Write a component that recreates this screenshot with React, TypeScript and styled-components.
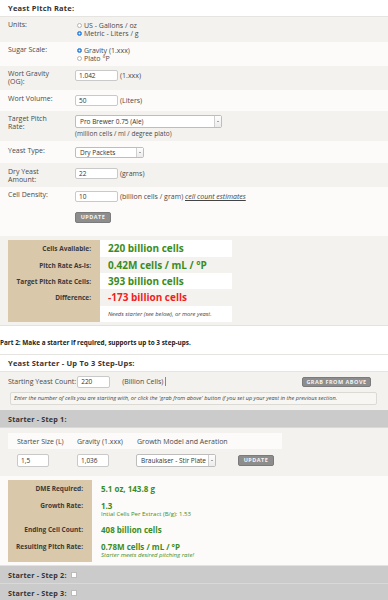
import React from 'react'
import styled, { createGlobalStyle } from 'styled-components'

const GlobalStyle = createGlobalStyle`
  html, body {
    margin: 0;
    padding: 0;
    background: #fff;
  }
  body {
    font-family: "Open Sans", "Liberation Sans", sans-serif;
    color: #4a4a4a;
  }
`

const Page = styled.div`
  width: 388px;
  height: 600px;
  overflow: hidden;
  background: #fff;
`

const SectionTitle = styled.div<{ $border?: boolean }>`
  height: 16px;
  line-height: 16px;
  padding-left: 8px;
  font-size: 7.5px;
  font-weight: 700;
  letter-spacing: 0.2px;
  color: #333;
  border-top: ${p => (p.$border ? '1px solid #e6e4e0' : 'none')};
  border-bottom: 1px solid #e6e4e0;
`

const FormRow = styled.div<{ $alt?: boolean; $h: number; $pt?: number }>`
  display: flex;
  align-items: flex-start;
  box-sizing: border-box;
  height: ${p => p.$h}px;
  padding: ${p => p.$pt ?? 4}px 0 0 8px;
  background: ${p => (p.$alt ? '#fcfbf9' : '#f3f2ef')};
`

const Label = styled.div`
  width: 48px;
  margin-right: 19px;
  font-size: 7px;
  line-height: 8px;
  color: #4a4a4a;
`

const Field = styled.div`
  display: flex;
  flex-direction: column;
  align-items: flex-start;
`

const Inline = styled.div`
  display: flex;
  align-items: center;
  gap: 2px;
  font-size: 7px;
  color: #4a4a4a;
  white-space: nowrap;
`

const RadioLine = styled.div`
  display: flex;
  align-items: center;
  height: 8px;
  font-size: 7px;
  color: #4a4a4a;
  padding-left: 2px;
`

const Radio = styled.span<{ $on?: boolean }>`
  display: inline-block;
  box-sizing: border-box;
  width: 5px;
  height: 5px;
  margin-right: 2px;
  border-radius: 50%;
  border: 1px solid ${p => (p.$on ? '#2f7fd8' : '#b5b5b5')};
  background: ${p =>
    p.$on ? 'radial-gradient(circle, #fff 0 0.7px, #3b8de6 1.1px)' : '#fff'};
`

const TextInput = styled.div<{ $w?: number; $h?: number }>`
  box-sizing: border-box;
  width: ${p => p.$w ?? 43}px;
  height: ${p => p.$h ?? 11}px;
  line-height: ${p => (p.$h ?? 11) - 2}px;
  padding-left: 3px;
  background: #fff;
  border: 1px solid #c9c9c9;
  border-radius: 2px;
  font-size: 6.5px;
  color: #333;
`

const Select = styled.div<{ $w: number; $h: number }>`
  box-sizing: border-box;
  display: flex;
  align-items: stretch;
  width: ${p => p.$w}px;
  height: ${p => p.$h}px;
  background: #fff;
  border: 1px solid #bdbdbd;
  border-radius: 2px;
  font-size: 6.5px;
  color: #333;
`

const SelectText = styled.span`
  flex: 1;
  display: flex;
  align-items: center;
  padding-left: 4px;
  white-space: nowrap;
  overflow: hidden;
`

const SelectArrow = styled.span`
  width: 6px;
  border-left: 1px solid #cfcfcf;
  display: flex;
  align-items: center;
  justify-content: center;
  background: linear-gradient(#fdfdfd, #ececec);
  &::after {
    content: '';
    border-left: 1.3px solid transparent;
    border-right: 1.3px solid transparent;
    border-top: 1.5px solid #555;
  }
`

const Hint = styled.div`
  font-size: 6.5px;
  line-height: 8px;
  color: #4a4a4a;
  margin-top: 2px;
`

const EstimateLink = styled.span`
  font-style: italic;
  text-decoration: underline;
  color: #444;
`

const Button = styled.div<{ $w: number; $h?: number }>`
  box-sizing: border-box;
  flex: 0 0 auto;
  width: ${p => p.$w}px;
  height: ${p => p.$h ?? 11}px;
  line-height: ${p => (p.$h ?? 11) - 2}px;
  text-align: center;
  background: #8d8d8d;
  border: 1px solid #7b7b7b;
  border-radius: 2px;
  color: #f4f4f4;
  font-size: 5.5px;
  font-weight: 700;
  letter-spacing: 0.5px;
  white-space: nowrap;
`

const ButtonGap = styled.div`
  height: 10px;
`

const ResultsPanel = styled.div<{ $bg: string }>`
  background: ${p => p.$bg};
  padding: 4px 0 3px 8px;
  border-bottom: 1px solid #e4e2de;
`

const ResultRow = styled.div<{ $h: number }>`
  display: flex;
  height: ${p => p.$h}px;
`

const ResultLabel = styled.div<{ $w: number }>`
  box-sizing: border-box;
  flex: 0 0 ${p => p.$w}px;
  padding: 0 9px 0 0;
  background: #d9c8aa;
  font-size: 6.5px;
  font-weight: 700;
  color: #3a3a3a;
  display: flex;
  align-items: center;
  justify-content: flex-end;
  white-space: nowrap;
`

const ResultValue = styled.div<{ $w: number; $stripe?: boolean }>`
  box-sizing: border-box;
  flex: 0 0 ${p => p.$w}px;
  padding-left: 8px;
  background: ${p => (p.$stripe ? '#fff' : 'transparent')};
  display: flex;
  align-items: center;
  white-space: nowrap;
`

const BigValue = styled.span<{ $red?: boolean; $size?: number }>`
  font-size: ${p => p.$size ?? 10}px;
  line-height: 11px;
  font-weight: 700;
  color: ${p => (p.$red ? '#f01e1e' : '#3c8c1d')};
`

const Note = styled.span`
  font-size: 5.8px;
  font-style: italic;
  color: #444;
`

const Part2 = styled.div`
  margin-top: 12px;
  margin-bottom: 6px;
  height: 10px;
  line-height: 10px;
  font-size: 6.4px;
  font-weight: 700;
  color: #222;
  white-space: nowrap;
`

const StarterIntro = styled.div`
  background: #f3f2ef;
  padding: 3px 11px 5px 8px;
`

const CountRow = styled.div`
  display: flex;
  align-items: center;
  height: 13px;
  font-size: 7px;
  color: #4a4a4a;
  white-space: nowrap;
`

const CountLabel = styled.span`
  margin-right: 1px;
`

const CountUnit = styled.span`
  margin-left: 12px;
`

const Cursor = styled.span`
  display: inline-block;
  width: 1px;
  height: 9px;
  margin-left: 2px;
  background: #888;
`

const Spacer = styled.div`
  flex: 1;
`

const InfoBox = styled.div`
  margin: 4px 0 0 2px;
  height: 13px;
  box-sizing: border-box;
  line-height: 11px;
  padding-left: 3px;
  border: 1px solid #dcdad5;
  border-radius: 2px;
  background: #f7f6f3;
  font-size: 5.6px;
  font-style: italic;
  color: #444;
  white-space: nowrap;
  overflow: hidden;
`

const StepBar = styled.div`
  display: flex;
  align-items: center;
  height: 17px;
  padding-left: 8px;
  background: #cbcbcb;
  border-bottom: 1px solid #d9d9d9;
  font-size: 7.2px;
  font-weight: 700;
  letter-spacing: 0.2px;
  color: #333;
`

const Checkbox = styled.span`
  display: inline-block;
  width: 4px;
  height: 4px;
  margin-left: 4px;
  background: #fff;
  border: 0.5px solid #bbb;
`

const StepBody = styled.div`
  background: #f3f2ef;
  padding: 5px 0 9px 8px;
`

const StepHeaderRow = styled.div`
  display: flex;
  width: 274px;
  height: 16px;
  align-items: center;
  background: #fcfbf9;
  padding-left: 9px;
  box-sizing: border-box;
  font-size: 7px;
  color: #4a4a4a;
  white-space: nowrap;
`

const StepInputRow = styled.div`
  display: flex;
  align-items: center;
  margin-top: 5px;
  padding-left: 9px;
`

const Col = styled.div<{ $w: number }>`
  flex: 0 0 ${p => p.$w}px;
`

const StackLabel = styled.div<{ $w: number }>`
  box-sizing: border-box;
  flex: 0 0 ${p => p.$w}px;
  padding: 3px 9px 0 0;
  text-align: right;
  background: #d9c8aa;
  font-size: 6.5px;
  line-height: 11px;
  font-weight: 700;
  color: #3a3a3a;
  white-space: nowrap;
`

const StackValue = styled.div`
  box-sizing: border-box;
  padding: 3px 0 0 9px;
  display: flex;
  flex-direction: column;
  align-items: flex-start;
  white-space: nowrap;
`

const Sub = styled.div<{ $italic?: boolean }>`
  font-size: 6px;
  line-height: 7px;
  color: #3c8c1d;
  font-style: ${p => (p.$italic ? 'italic' : 'normal')};
`

function Part1() {
  return (
    <>
      <SectionTitle>Yeast Pitch Rate:</SectionTitle>
      <FormRow $h={25}>
        <Label>Units:</Label>
        <Field>
          <RadioLine>
            <Radio />
            US - Gallons / oz
          </RadioLine>
          <RadioLine>
            <Radio $on />
            Metric - Liters / g
          </RadioLine>
        </Field>
      </FormRow>
      <FormRow $alt $h={24}>
        <Label>Sugar Scale:</Label>
        <Field>
          <RadioLine>
            <Radio $on />
            Gravity (1.xxx)
          </RadioLine>
          <RadioLine>
            <Radio />
            Plato °P
          </RadioLine>
        </Field>
      </FormRow>
      <FormRow $h={24}>
        <Label>Wort Gravity (OG):</Label>
        <Inline>
          <TextInput>1.042</TextInput>
          <span>(1.xxx)</span>
        </Inline>
      </FormRow>
      <FormRow $alt $h={21} $pt={5}>
        <Label>Wort Volume:</Label>
        <Inline>
          <TextInput>50</TextInput>
          <span>(Liters)</span>
        </Inline>
      </FormRow>
      <FormRow $h={30}>
        <Label>Target Pitch Rate:</Label>
        <Field>
          <Select $w={147} $h={13}>
            <SelectText>Pro Brewer 0.75 (Ale)</SelectText>
            <SelectArrow />
          </Select>
          <Hint>(million cells / ml / degree plato)</Hint>
        </Field>
      </FormRow>
      <FormRow $alt $h={22} $pt={6}>
        <Label>Yeast Type:</Label>
        <Select $w={69} $h={11}>
          <SelectText>Dry Packets</SelectText>
          <SelectArrow />
        </Select>
      </FormRow>
      <FormRow $h={24} $pt={5}>
        <Label>Dry Yeast Amount:</Label>
        <Inline>
          <TextInput>22</TextInput>
          <span>(grams)</span>
        </Inline>
      </FormRow>
      <FormRow $alt $h={49} $pt={4}>
        <Label>Cell Density:</Label>
        <Field>
          <Inline>
            <TextInput>10</TextInput>
            <span>
              (billion cells / gram) <EstimateLink>cell count estimates</EstimateLink>
            </span>
          </Inline>
          <ButtonGap />
          <Button $w={36}>UPDATE</Button>
        </Field>
      </FormRow>
      <ResultsPanel $bg="#f3f2ef">
        <ResultRow $h={17}>
          <ResultLabel $w={92}>Cells Available:</ResultLabel>
          <ResultValue $w={132} $stripe>
            <BigValue>220 billion cells</BigValue>
          </ResultValue>
        </ResultRow>
        <ResultRow $h={16}>
          <ResultLabel $w={92}>Pitch Rate As-Is:</ResultLabel>
          <ResultValue $w={132}>
            <BigValue>0.42M cells / mL / °P</BigValue>
          </ResultValue>
        </ResultRow>
        <ResultRow $h={16}>
          <ResultLabel $w={92}>Target Pitch Rate Cells:</ResultLabel>
          <ResultValue $w={132} $stripe>
            <BigValue>393 billion cells</BigValue>
          </ResultValue>
        </ResultRow>
        <ResultRow $h={17}>
          <ResultLabel $w={92}>Difference:</ResultLabel>
          <ResultValue $w={132}>
            <BigValue $red>-173 billion cells</BigValue>
          </ResultValue>
        </ResultRow>
        <ResultRow $h={16}>
          <ResultLabel $w={92} />
          <ResultValue $w={132} $stripe>
            <Note>Needs starter (see below), or more yeast.</Note>
          </ResultValue>
        </ResultRow>
      </ResultsPanel>
    </>
  )
}

function Part2Section() {
  return (
    <>
      <Part2>Part 2: Make a starter if required, supports up to 3 step-ups.</Part2>
      <SectionTitle $border>Yeast Starter - Up To 3 Step-Ups:</SectionTitle>
      <StarterIntro>
        <CountRow>
          <CountLabel>Starting Yeast Count:</CountLabel>
          <TextInput $w={33} $h={12}>220</TextInput>
          <CountUnit>(Billion Cells)</CountUnit>
          <Cursor />
          <Spacer />
          <Button $w={69} $h={10} style={{ marginRight: 6 }}>
            GRAB FROM ABOVE
          </Button>
        </CountRow>
        <InfoBox>
          Enter the number of cells you are starting with, or click the 'grab from above' button if
          you set up your yeast in the previous section.
        </InfoBox>
      </StarterIntro>
      <StepBar>Starter - Step 1:</StepBar>
      <StepBody>
        <StepHeaderRow>
          <Col $w={60}>Starter Size (L)</Col>
          <Col $w={60}>Gravity (1.xxx)</Col>
          <Col $w={101}>Growth Model and Aeration</Col>
        </StepHeaderRow>
        <StepInputRow>
          <Col $w={60}>
            <TextInput $w={32} $h={13}>1,5</TextInput>
          </Col>
          <Col $w={59}>
            <TextInput $w={32} $h={13}>1,036</TextInput>
          </Col>
          <Col $w={102}>
            <Select $w={80} $h={13}>
              <SelectText>Braukaiser - Stir Plate</SelectText>
              <SelectArrow />
            </Select>
          </Col>
          <Button $w={36}>UPDATE</Button>
        </StepInputRow>
      </StepBody>
      <ResultsPanel $bg="#fcfbf9">
        <ResultRow $h={17}>
          <StackLabel $w={84}>DME Required:</StackLabel>
          <StackValue>
            <BigValue $size={8}>5.1 oz, 143.8 g</BigValue>
          </StackValue>
        </ResultRow>
        <ResultRow $h={24}>
          <StackLabel $w={84}>Growth Rate:</StackLabel>
          <StackValue>
            <BigValue $size={8}>1.3</BigValue>
            <Sub>Intial Cells Per Extract (B/g): 1.53</Sub>
          </StackValue>
        </ResultRow>
        <ResultRow $h={17}>
          <StackLabel $w={84}>Ending Cell Count:</StackLabel>
          <StackValue>
            <BigValue $size={8}>408 billion cells</BigValue>
          </StackValue>
        </ResultRow>
        <ResultRow $h={24}>
          <StackLabel $w={84}>Resulting Pitch Rate:</StackLabel>
          <StackValue>
            <BigValue $size={8}>0.78M cells / mL / °P</BigValue>
            <Sub $italic>Starter meets desired pitching rate!</Sub>
          </StackValue>
        </ResultRow>
      </ResultsPanel>
      <StepBar>
        Starter - Step 2:
        <Checkbox />
      </StepBar>
      <StepBar>
        Starter - Step 3:
        <Checkbox />
      </StepBar>
    </>
  )
}

export default function App() {
  return (
    <>
      <GlobalStyle />
      <Page>
        <Part1 />
        <Part2Section />
      </Page>
    </>
  )
}
